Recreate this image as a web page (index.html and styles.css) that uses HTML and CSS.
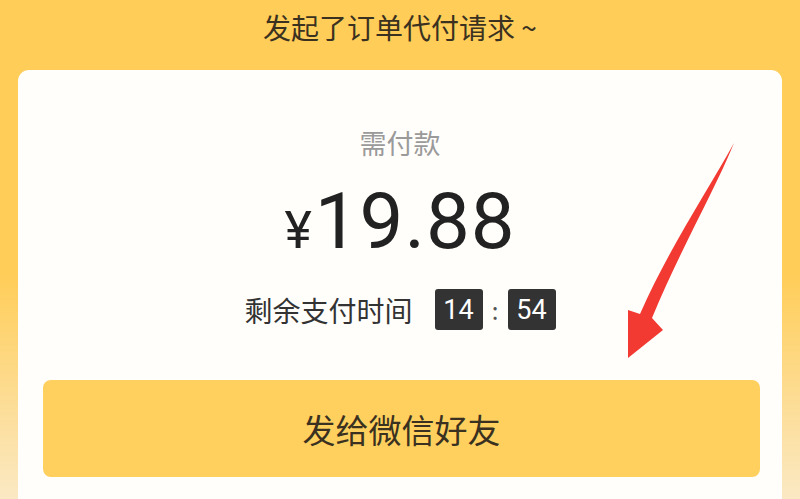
FILE: index.html
```html
<!DOCTYPE html>
<html lang="zh">
<head>
<meta charset="utf-8">
<link rel="stylesheet" href="styles.css">
</head>
<body>
<div class="page">
  <div class="header">发起了订单代付请求 ~</div>
  <div class="card">
    <div class="label">需付款</div>
    <div class="price"><span class="yen">¥</span>19.88</div>
    <div class="timer">
      <span class="timer-label">剩余支付时间</span>
      <span class="box">14</span>
      <span class="colon">:</span>
      <span class="box">54</span>
    </div>
    <div class="button">发给微信好友</div>
  </div>
  <svg class="arrow" width="800" height="499" viewBox="0 0 800 499">
    <path d="M734 143 C 715 190, 680 250, 652 318 L 663 330 L 628 358 L 628 310 L 640 314 C 668 250, 708 190, 734 143 Z" fill="#f23a33"/>
  </svg>
</div>
</body>
</html>
```
FILE: styles.css
```css
html, body {
  margin: 0;
  padding: 0;
}
body {
  width: 800px;
  height: 499px;
  overflow: hidden;
  font-family: "Noto Sans CJK SC", "Noto Sans", sans-serif;
}
.page {
  position: relative;
  width: 800px;
  height: 499px;
  background: linear-gradient(180deg, #ffcd58 0%, #ffcd58 55%, #fbe9c4 100%);
  overflow: hidden;
}
.header {
  height: 54px;
  line-height: 54px;
  text-align: center;
  font-size: 28px;
  color: #3a3120;
}
.card {
  margin: 16px 18px 0;
  height: 460px;
  background: #fffefb;
  border-radius: 11px;
  display: flex;
  flex-direction: column;
  align-items: center;
  padding-top: 57px;
  box-sizing: border-box;
}
.label {
  font-size: 27px;
  line-height: 32px;
  color: #9a9a9a;
}
.price {
  margin-top: 18px;
  font-family: Roboto, "Noto Sans", sans-serif;
  font-size: 78px;
  line-height: 90px;
  color: #222;
  letter-spacing: 1px;
}
.yen {
  font-size: 52px;
  margin-right: 2px;
}
.timer {
  margin-top: 13px;
  height: 41px;
  display: flex;
  align-items: center;
  color: #333;
}
.timer-label {
  font-size: 28px;
  margin-right: 22px;
}
.box {
  width: 48px;
  height: 41px;
  background: #333;
  color: #fff;
  border-radius: 3px;
  display: flex;
  align-items: center;
  justify-content: center;
  font-family: Roboto, "Noto Sans", sans-serif;
  font-size: 27px;
}
.colon {
  width: 25px;
  text-align: center;
  font-size: 24px;
  color: #555;
}
.button {
  margin-top: 50px;
  align-self: stretch;
  margin-left: 25px;
  margin-right: 22px;
  height: 97px;
  border-radius: 8px;
  background: #ffd05e;
  display: flex;
  align-items: center;
  justify-content: center;
  font-size: 33px;
  color: #3a3120;
}
.arrow {
  position: absolute;
  left: 0;
  top: 0;
  pointer-events: none;
}
```
